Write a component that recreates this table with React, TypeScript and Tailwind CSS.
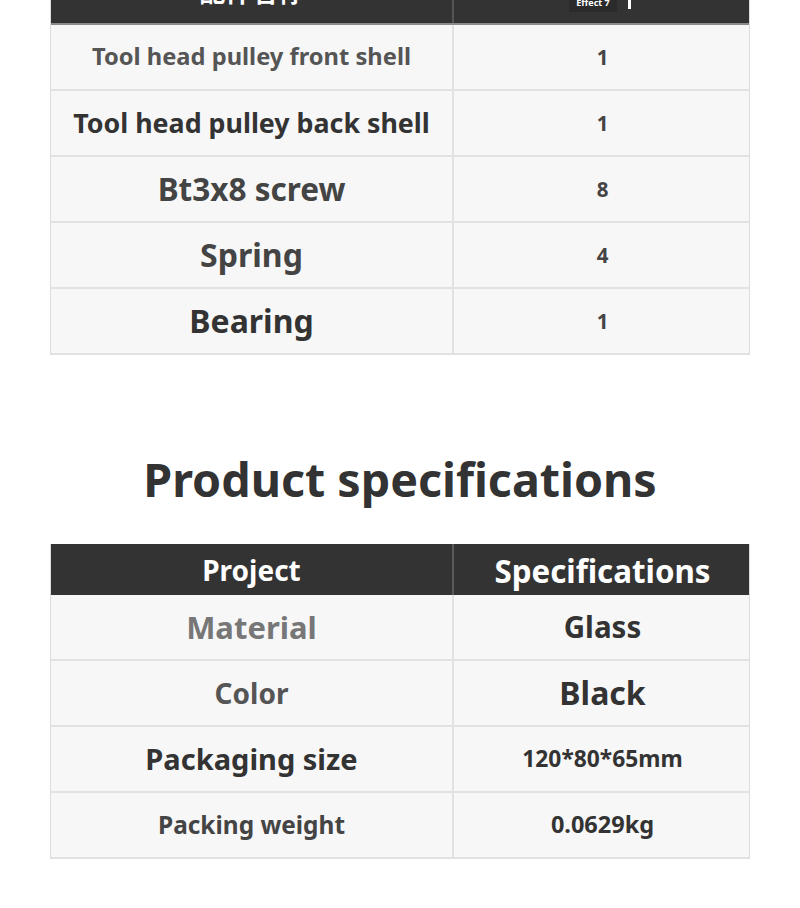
import React from "react";

type Cell = { text: string; cls: string };
type Row = [Cell, Cell];

const font = { fontFamily: "'Noto Sans', 'Open Sans', 'Noto Sans CJK SC', sans-serif" };

const parts: Row[] = [
  [
    { text: "Tool head pulley front shell", cls: "text-[23.7px] text-[#555555]" },
    { text: "1", cls: "text-[20.5px] text-[#444444]" },
  ],
  [
    { text: "Tool head pulley back shell", cls: "text-[26.8px] text-[#333333]" },
    { text: "1", cls: "text-[20.5px] text-[#444444]" },
  ],
  [
    { text: "Bt3x8 screw", cls: "text-[31.5px] text-[#444444]" },
    { text: "8", cls: "text-[20.5px] text-[#444444]" },
  ],
  [
    { text: "Spring", cls: "text-[32px] text-[#444444]" },
    { text: "4", cls: "text-[20.5px] text-[#444444]" },
  ],
  [
    { text: "Bearing", cls: "text-[32px] text-[#333333]" },
    { text: "1", cls: "text-[20.5px] text-[#444444]" },
  ],
];

const specs: Row[] = [
  [
    { text: "Material", cls: "text-[31px] text-[#777777]" },
    { text: "Glass", cls: "text-[29.5px] text-[#333333]" },
  ],
  [
    { text: "Color", cls: "text-[28px] text-[#555555]" },
    { text: "Black", cls: "text-[32px] text-[#333333]" },
  ],
  [
    { text: "Packaging size", cls: "text-[29px] text-[#333333]" },
    { text: "120*80*65mm", cls: "text-[22.8px] text-[#333333]" },
  ],
  [
    { text: "Packing weight", cls: "text-[24.4px] text-[#444444]" },
    { text: "0.0629kg", cls: "text-[23.5px] text-[#333333]" },
  ],
];

function Rows({ rows }: { rows: Row[] }) {
  return (
    <>
      {rows.map((r, i) => (
        <div
          key={i}
          className="grid grid-cols-[403px_297px] h-[66px] border-b-2 border-[#e2e2e2] bg-[#f7f7f7]"
        >
          <div className={`flex items-center justify-center border-r-2 border-[#e2e2e2] font-bold ${r[0].cls}`}>
            {r[0].text}
          </div>
          <div className={`flex items-center justify-center font-bold ${r[1].cls}`}>{r[1].text}</div>
        </div>
      ))}
    </>
  );
}

export default function App() {
  return (
    <div className="w-[800px] h-[908px] overflow-hidden bg-white" style={font}>
      <div className="w-[700px] mx-auto">
        {/* Table 1 */}
        <div className="border-x border-[#dddddd]">
          <div className="grid grid-cols-[403px_297px] h-[57px] mt-[-32px] bg-[#333333] border-b-2 border-[#8a8a8a]">
            <div className="flex items-center justify-center pb-[6px] border-r-2 border-[#555555] text-white text-[26px] font-bold">
              配件名称
            </div>
            <div className="relative">
              <div className="absolute left-[115px] top-[26px] h-[18px] w-[48px] bg-[#2b2b2b] flex items-center justify-center text-[9px] font-bold text-white">
                Effect 7
              </div>
              <div className="absolute left-[174px] top-[20px] h-[21px] w-[3px] bg-white" />
            </div>
          </div>
          <Rows rows={parts} />
        </div>

        {/* Title */}
        <h2 className="mt-[96px] mb-[37px] h-[56px] leading-[56px] text-center text-[46.6px] font-bold text-[#333333]">
          Product specifications
        </h2>

        {/* Table 2 */}
        <div className="border-x border-[#dddddd]">
          <div className="grid grid-cols-[403px_297px] h-[51px] bg-[#333333]">
            <div className="flex items-center justify-center border-r-2 border-[#5a5a5a] text-white text-[28px] font-bold">
              Project
            </div>
            <div className="flex items-center justify-center pt-[4px] text-white text-[31.3px] font-bold">
              Specifications
            </div>
          </div>
          <Rows rows={specs} />
        </div>
      </div>
    </div>
  );
}
